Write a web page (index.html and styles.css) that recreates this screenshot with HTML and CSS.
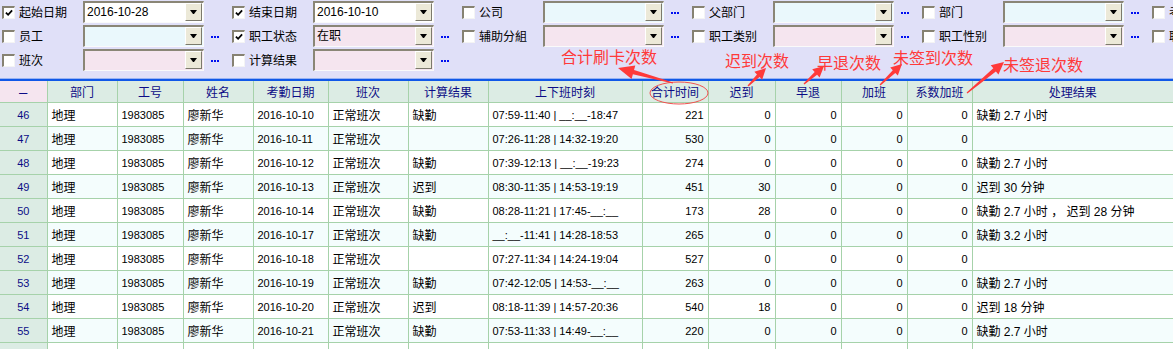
FILE: index.html
```html
<!DOCTYPE html>
<html>
<head>
	<title>考勤明细</title>
	<link rel="stylesheet" href="styles.css">
</head>
<body>
	<div class="filters">
		<div class="filter-row">
			<div class="group"><span class="chk on"><svg viewBox="0 0 9 9"><path d="M1 4 L3.5 6.5 L8 1.5" /></svg></span><span class="lbl">起始日期</span><span class="combo white">2016-10-28<span class="drop"></span></span></div>
			<div class="group"><span class="chk on"><svg viewBox="0 0 9 9"><path d="M1 4 L3.5 6.5 L8 1.5" /></svg></span><span class="lbl">结束日期</span><span class="combo white">2016-10-10<span class="drop"></span></span></div>
			<div class="group"><span class="chk"></span><span class="lbl">公司</span><span class="combo cyan"><span class="drop"></span></span><span class="dots"></span></div>
			<div class="group"><span class="chk"></span><span class="lbl">父部门</span><span class="combo cyan"><span class="drop"></span></span><span class="dots"></span></div>
			<div class="group"><span class="chk"></span><span class="lbl">部门</span><span class="combo cyan"><span class="drop"></span></span><span class="dots"></span></div>
			<div class="group"><span class="chk"></span><span class="lbl">考勤组</span></div>
		</div>
		<div class="filter-row">
			<div class="group"><span class="chk"></span><span class="lbl">员工</span><span class="combo cyan"><span class="drop"></span></span><span class="dots"></span></div>
			<div class="group"><span class="chk on"><svg viewBox="0 0 9 9"><path d="M1 4 L3.5 6.5 L8 1.5" /></svg></span><span class="lbl">职工状态</span><span class="combo pink">在职<span class="drop"></span></span><span class="dots"></span></div>
			<div class="group"><span class="chk"></span><span class="lbl">辅助分組</span><span class="combo pink"><span class="drop"></span></span><span class="dots"></span></div>
			<div class="group"><span class="chk"></span><span class="lbl">职工类别</span><span class="combo pink"><span class="drop"></span></span><span class="dots"></span></div>
			<div class="group"><span class="chk"></span><span class="lbl">职工性别</span><span class="combo pink"><span class="drop"></span></span><span class="dots"></span></div>
			<div class="group"><span class="chk"></span><span class="lbl">职务</span></div>
		</div>
		<div class="filter-row">
			<div class="group"><span class="chk"></span><span class="lbl">班次</span><span class="combo pink"><span class="drop"></span></span><span class="dots"></span></div>
			<div class="group"><span class="chk"></span><span class="lbl">计算结果</span><span class="combo pink"><span class="drop"></span></span><span class="dots"></span></div>
		</div>
	</div>

	<table class="grid">
		<colgroup>
			<col style="width:47px"><col style="width:70px"><col style="width:66px"><col style="width:70px"><col style="width:75px"><col style="width:80px"><col style="width:80px"><col style="width:154px"><col style="width:66px"><col style="width:67px"><col style="width:66px"><col style="width:66px"><col style="width:65px"><col style="width:201px">
		</colgroup>
		<thead>
			<tr>
				<th class="corner">–</th>
				<th>部门</th>
				<th>工号</th>
				<th>姓名</th>
				<th>考勤日期</th>
				<th>班次</th>
				<th>计算结果</th>
				<th>上下班时刻</th>
				<th>合计时间</th>
				<th>迟到</th>
				<th>早退</th>
				<th>加班</th>
				<th>系数加班</th>
				<th>处理结果</th>
			</tr>
		</thead>
		<tbody>
			<tr><td class="idx">46</td><td class="zh">地理</td><td>1983085</td><td class="zh">廖新华</td><td>2016-10-10</td><td class="zh">正常班次</td><td class="zh">缺勤</td><td>07:59-11:40 | __:__-18:47</td><td class="num">221</td><td class="num">0</td><td class="num">0</td><td class="num">0</td><td class="num">0</td><td class="zh">缺勤 2.7 小时</td></tr>
			<tr><td class="idx">47</td><td class="zh">地理</td><td>1983085</td><td class="zh">廖新华</td><td>2016-10-11</td><td class="zh">正常班次</td><td class="zh"></td><td>07:26-11:28 | 14:32-19:20</td><td class="num">530</td><td class="num">0</td><td class="num">0</td><td class="num">0</td><td class="num">0</td><td class="zh"></td></tr>
			<tr><td class="idx">48</td><td class="zh">地理</td><td>1983085</td><td class="zh">廖新华</td><td>2016-10-12</td><td class="zh">正常班次</td><td class="zh">缺勤</td><td>07:39-12:13 | __:__-19:23</td><td class="num">274</td><td class="num">0</td><td class="num">0</td><td class="num">0</td><td class="num">0</td><td class="zh">缺勤 2.7 小时</td></tr>
			<tr><td class="idx">49</td><td class="zh">地理</td><td>1983085</td><td class="zh">廖新华</td><td>2016-10-13</td><td class="zh">正常班次</td><td class="zh">迟到</td><td>08:30-11:35 | 14:53-19:19</td><td class="num">451</td><td class="num">30</td><td class="num">0</td><td class="num">0</td><td class="num">0</td><td class="zh">迟到 30 分钟</td></tr>
			<tr><td class="idx">50</td><td class="zh">地理</td><td>1983085</td><td class="zh">廖新华</td><td>2016-10-14</td><td class="zh">正常班次</td><td class="zh">缺勤</td><td>08:28-11:21 | 17:45-__:__</td><td class="num">173</td><td class="num">28</td><td class="num">0</td><td class="num">0</td><td class="num">0</td><td class="zh">缺勤 2.7 小时 ， 迟到 28 分钟</td></tr>
			<tr><td class="idx">51</td><td class="zh">地理</td><td>1983085</td><td class="zh">廖新华</td><td>2016-10-17</td><td class="zh">正常班次</td><td class="zh">缺勤</td><td>__:__-11:41 | 14:28-18:53</td><td class="num">265</td><td class="num">0</td><td class="num">0</td><td class="num">0</td><td class="num">0</td><td class="zh">缺勤 3.2 小时</td></tr>
			<tr><td class="idx">52</td><td class="zh">地理</td><td>1983085</td><td class="zh">廖新华</td><td>2016-10-18</td><td class="zh">正常班次</td><td class="zh"></td><td>07:27-11:34 | 14:24-19:04</td><td class="num">527</td><td class="num">0</td><td class="num">0</td><td class="num">0</td><td class="num">0</td><td class="zh"></td></tr>
			<tr><td class="idx">53</td><td class="zh">地理</td><td>1983085</td><td class="zh">廖新华</td><td>2016-10-19</td><td class="zh">正常班次</td><td class="zh">缺勤</td><td>07:42-12:05 | 14:53-__:__</td><td class="num">263</td><td class="num">0</td><td class="num">0</td><td class="num">0</td><td class="num">0</td><td class="zh">缺勤 2.7 小时</td></tr>
			<tr><td class="idx">54</td><td class="zh">地理</td><td>1983085</td><td class="zh">廖新华</td><td>2016-10-20</td><td class="zh">正常班次</td><td class="zh">迟到</td><td>08:18-11:39 | 14:57-20:36</td><td class="num">540</td><td class="num">18</td><td class="num">0</td><td class="num">0</td><td class="num">0</td><td class="zh">迟到 18 分钟</td></tr>
			<tr><td class="idx">55</td><td class="zh">地理</td><td>1983085</td><td class="zh">廖新华</td><td>2016-10-21</td><td class="zh">正常班次</td><td class="zh">缺勤</td><td>07:53-11:33 | 14:49-__:__</td><td class="num">220</td><td class="num">0</td><td class="num">0</td><td class="num">0</td><td class="num">0</td><td class="zh">缺勤 2.7 小时</td></tr>
			<tr><td class="idx"></td><td></td><td></td><td></td><td></td><td></td><td></td><td></td><td></td><td></td><td></td><td></td><td></td><td></td></tr>
		</tbody>
	</table>

	<!-- red notes drawn over the screenshot -->
	<div class="notes">
		<svg class="marks" width="1173" height="349">
			<ellipse cx="679" cy="93" rx="29" ry="11" />
			<polygon points="0,-0.6 41,-2.2 41,-7 57,0 41,7 41,2.2 0,0.6" transform="translate(673 83) rotate(195.3)" />
			<polygon points="0,-0.6 14.5,-1.8 14.5,-5.5 25.5,0 14.5,5.5 14.5,1.8 0,0.6" transform="translate(748 86) rotate(-45)" />
			<polygon points="0,-0.6 16,-1.8 16,-5.5 27,0 16,5.5 16,1.8 0,0.6" transform="translate(804 84) rotate(-42)" />
			<polygon points="0,-0.6 19.4,-1.8 19.4,-5.5 30.4,0 19.4,5.5 19.4,1.8 0,0.6" transform="translate(880 85) rotate(-43.7)" />
			<polygon points="0,-0.6 36,-2 36,-6 48.3,0 36,6 36,2 0,0.6" transform="translate(967 93) rotate(-40)" />
		</svg>
		<span class="note" style="left:561px;top:48px">合计刷卡次数</span>
		<span class="note" style="left:725px;top:52px">迟到次数</span>
		<span class="note" style="left:817px;top:54px">早退次数</span>
		<span class="note" style="left:893px;top:49px">未签到次数</span>
		<span class="note" style="left:1003px;top:56px">未签退次数</span>
	</div>
</body>
</html>
```

FILE: styles.css
```css
body {
	margin: 0;
	width: 1173px;
	height: 349px;
	overflow: hidden;
	position: relative;
	background-color: #fff;
	font-family: "Liberation Sans", "Noto Sans CJK SC", sans-serif;
	font-size: 12px;
	color: #000;
}
.filters {
	background-color: #e0e0f8;
	height: 79px;
	padding-top: 1px;
	box-sizing: border-box;
	border-bottom: 1px solid #9ab4f2;
	display: flex;
	flex-direction: column;
	gap: 2px;
	overflow: hidden;
}
.filter-row {
	display: flex;
	height: 22px;
}
.group {
	width: 230px;
	flex: none;
	display: flex;
	align-items: center;
	white-space: nowrap;
}
.chk {
	margin-left: 2px;
	width: 13px;
	height: 13px;
	box-sizing: border-box;
	background-color: #fff;
	border-style: solid;
	border-width: 2px 1px 1px 2px;
	border-color: #868272 #f4f4f4 #f4f4f4 #868272;
	display: flex;
	align-items: center;
	justify-content: center;
}
.chk svg {
	width: 8px;
	height: 8px;
	display: block;
}
.chk path {
	fill: none;
	stroke: #000;
	stroke-width: 2;
}
.lbl {
	margin-left: 4px;
	width: 64px;
	font-family: "Noto Sans CJK SC", sans-serif;
	font-size: 12px;
	line-height: 14px;
}
.combo {
	position: relative;
	width: 121px;
	height: 22px;
	box-sizing: border-box;
	border-style: solid;
	border-width: 2px 1px 1px 2px;
	border-color: #8a8676 #fafafa #fafafa #8a8676;
	padding-left: 2px;
	font-size: 12px;
	line-height: 19px;
	display: flex;
	align-items: center;
}
.white { background-color: #fff; }
.cyan { background-color: #eaf8fc; }
.pink { background-color: #f5e5ef; }
.drop {
	position: absolute;
	right: 1px;
	top: 0;
	width: 17px;
	height: 18px;
	box-sizing: border-box;
	background-color: #ece9d8;
	border-style: solid;
	border-width: 1px;
	border-color: #fff #7c7a6c #7c7a6c #fff;
	display: flex;
	align-items: center;
	justify-content: center;
}
.drop::after {
	content: "";
	width: 1px;
	border-top: 4px solid #000;
	border-left: 3px solid transparent;
	border-right: 3px solid transparent;
}
.dots {
	margin-left: 7px;
	margin-top: 2px;
	width: 8px;
	height: 2px;
	background: repeating-linear-gradient(90deg, #0010f0 0 2px, transparent 2px 3px);
}
.grid {
	border-top: 2px solid #1058e8;
	border-collapse: collapse;
	table-layout: fixed;
	width: 1173px;
}
.grid th, .grid td {
	border: 1px solid #a6d2aa;
	padding: 0 4px;
	white-space: nowrap;
	overflow: hidden;
	text-align: left;
}
.grid tr > :first-child {
	border-left: none;
}
.grid tr > :last-child {
	border-right: none;
}
.grid th {
	height: 21px;
	background-color: #dcece4;
	color: #0c0c86;
	font-family: "Noto Sans CJK SC", sans-serif;
	font-weight: normal;
	font-size: 12px;
	text-align: center;
}
.grid th.corner {
	background-color: #f5e5ef;
	font-family: "Liberation Sans", sans-serif;
	font-size: 15px;
}
.grid td {
	height: 23px;
	font-size: 11px;
}
.grid tbody tr:nth-child(even) td {
	background-color: #f4fdfd;
}
.grid td.idx, .grid tbody tr:nth-child(even) td.idx {
	background-color: #dcece4;
	color: #0c0c86;
	text-align: center;
}
.grid td.zh {
	font-size: 12px;
}
.grid td.num {
	text-align: right;
}
.notes {
	position: absolute;
	left: 0;
	top: 0;
	width: 1173px;
	height: 349px;
	pointer-events: none;
}
.marks {
	position: absolute;
	left: 0;
	top: 0;
}
.marks ellipse {
	fill: none;
	stroke: #f05050;
	stroke-width: 1;
}
.marks polygon {
	fill: #ff3a3a;
}
.note {
	position: absolute;
	color: #ff3a3a;
	font-family: "Noto Sans CJK SC", sans-serif;
	font-size: 16px;
	line-height: 16px;
	white-space: nowrap;
}
```
